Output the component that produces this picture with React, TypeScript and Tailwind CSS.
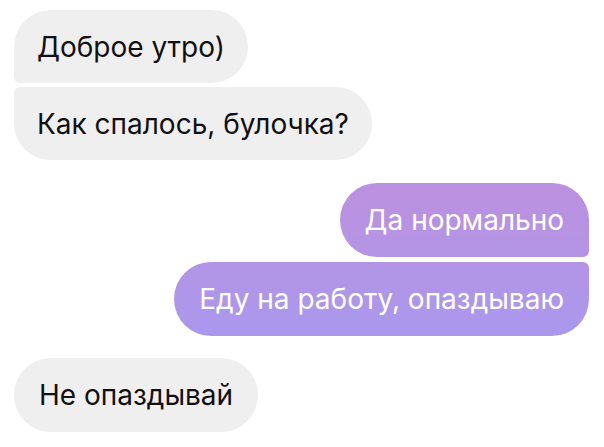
import React from 'react';

type Msg = { text: string; shape: string };

const incomingTop: Msg[] = [
  { text: 'Доброе утро)', shape: 'rounded-[37px] rounded-bl-[6px]' },
  { text: 'Как спалось, булочка?', shape: 'rounded-[37px] rounded-tl-[6px]' },
];

const outgoing: Msg[] = [
  { text: 'Да нормально', shape: 'rounded-[37px] rounded-br-[6px]' },
  { text: 'Еду на работу, опаздываю', shape: 'rounded-[37px] rounded-tr-[6px]' },
];

const App = () => {
  return (
    <div className="w-[604px] h-[447px] bg-white overflow-hidden pt-[10px] pl-[14px] pr-[15px] font-['Inter','Noto_Sans',sans-serif] text-[28px] leading-none">
      {/* Incoming */}
      <div className="flex flex-col items-start gap-[4px]">
        {incomingTop.map((m) => (
          <div key={m.text} className={`h-[73px] flex items-center px-[23px] bg-[#efefef] text-[#111] ${m.shape}`}>
            {m.text}
          </div>
        ))}
      </div>

      {/* Outgoing: one gradient across the screen, like the messenger does */}
      <div className="flex flex-col items-end gap-[5px] mt-[23px]">
        {outgoing.map((m) => (
          <div
            key={m.text}
            className={`h-[74px] flex items-center px-[25px] bg-fixed bg-[linear-gradient(to_bottom,#bc91df_183px,#aa98ec_336px)] text-white ${m.shape}`}
          >
            {m.text}
          </div>
        ))}
      </div>

      {/* Incoming */}
      <div className="flex flex-col items-start mt-[22px]">
        <div className="h-[74px] flex items-center px-[25px] bg-[#efefef] text-[#111] rounded-[37px]">
          Не опаздывай
        </div>
      </div>
    </div>
  );
};

export default App;
